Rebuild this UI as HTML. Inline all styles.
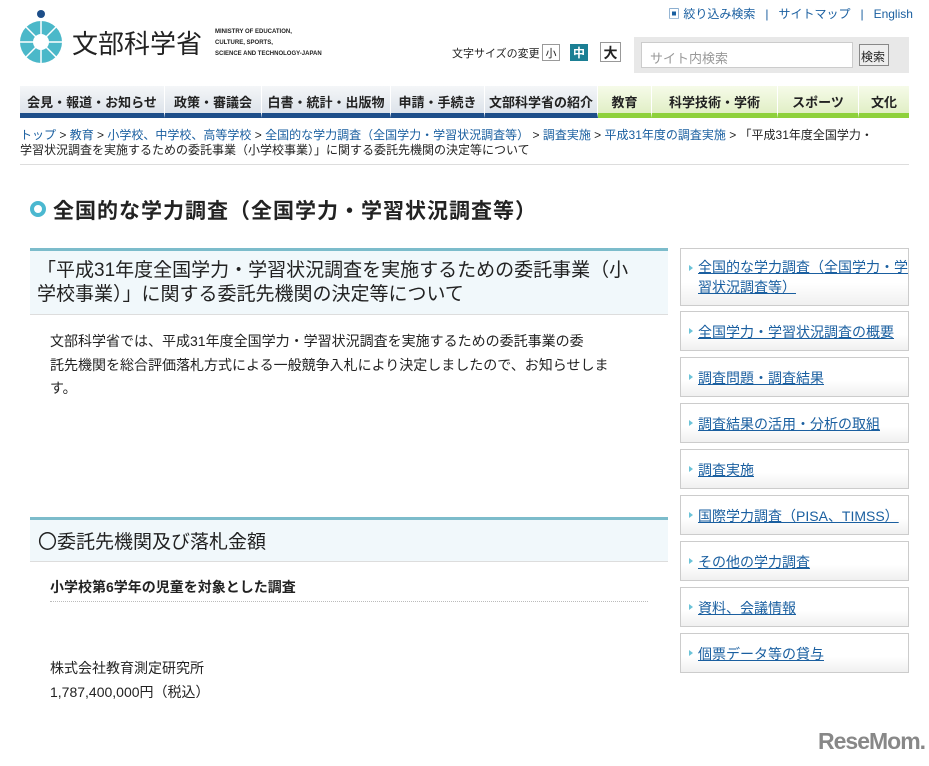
<!DOCTYPE html><html><head><meta charset="utf-8"><style>
*{margin:0;padding:0;box-sizing:border-box}
body{width:929px;height:766px;background:#fff;font-family:"Liberation Sans","Noto Sans CJK JP",sans-serif;color:#222;position:relative;overflow:hidden}
.a{position:absolute;white-space:nowrap}
a{color:#1a5fa0}
.nav{position:absolute;left:20px;top:86px;width:889px;height:32px;display:flex}
.nav div{height:32px;font-size:13px;font-weight:bold;display:flex;align-items:center;justify-content:center;border-right:1px solid #fff;background:linear-gradient(#f4f6f8,#dde3ea);border-bottom:5px solid #1d4e89;padding-top:4px}
.nav div.g{background:linear-gradient(#f6fbe9,#e1efc6);border-bottom-color:#8ed13c}
.side{position:absolute;left:680px;width:229px;height:40px;border:1px solid #ccc;background:linear-gradient(#fff 60%,#f0f0f0);font-size:14px;padding:10px 0 0 17px;color:#1a5fa0}
.side:before{content:"";position:absolute;left:8px;top:16px;border-left:4px solid #6cc3d8;border-top:3px solid transparent;border-bottom:3px solid transparent}
.side span{text-decoration:underline}
</style></head><body>
<div class="a" style="left:668px;top:5px;font-size:12px;color:#1a5fa0">▣ 絞り込み検索 &nbsp;&nbsp;|&nbsp;&nbsp; サイトマップ &nbsp;&nbsp;|&nbsp;&nbsp; English</div>
<svg class="a" style="left:18px;top:8px" width="46" height="56" viewBox="0 0 46 56"><circle cx="23" cy="6" r="4" fill="#1d4e89"/><circle cx="23" cy="34" r="21" fill="#4bb8c9"/><circle cx="23" cy="34" r="8" fill="#fff"/><g stroke="#fff" stroke-width="1.5"><line x1="23" y1="13" x2="23" y2="55"/><line x1="2" y1="34" x2="44" y2="34"/><line x1="8" y1="19" x2="38" y2="49"/><line x1="38" y1="19" x2="8" y2="49"/></g></svg>
<div class="a" style="left:72px;top:24px;font-size:26px;letter-spacing:0px;color:#222">文部科学省</div>
<div class="a" style="left:215px;top:27px;font-size:6px;line-height:11px;font-weight:bold">MINISTRY OF EDUCATION,<br>CULTURE, SPORTS,<br>SCIENCE AND TECHNOLOGY-JAPAN</div>
<div class="a" style="left:452px;top:45px;font-size:11px">文字サイズの変更</div>
<div class="a" style="left:542px;top:44px;width:18px;height:17px;border:1px solid #999;font-size:11px;text-align:center">小</div>
<div class="a" style="left:570px;top:44px;width:18px;height:17px;background:#1b7f94;color:#fff;font-size:12px;font-weight:bold;text-align:center">中</div>
<div class="a" style="left:600px;top:42px;width:21px;height:20px;border:1px solid #999;font-size:14px;font-weight:bold;text-align:center">大</div>
<div class="a" style="left:634px;top:37px;width:275px;height:36px;background:#e8e8e8"></div>
<div class="a" style="left:641px;top:42px;width:212px;height:26px;background:#fff;border:1px solid #ccc;font-size:13px;color:#999;padding:5px 8px">サイト内検索</div>
<div class="a" style="left:859px;top:44px;width:30px;height:22px;border:1px solid #888;background:#eee;font-size:12px;padding:3px 1px">検索</div>
<div class="nav"><div style="width:145px">会見・報道・お知らせ</div><div style="width:97px">政策・審議会</div><div style="width:129px">白書・統計・出版物</div><div style="width:94px">申請・手続き</div><div style="width:113px">文部科学省の紹介</div><div class="g" style="width:54px">教育</div><div class="g" style="width:126px">科学技術・学術</div><div class="g" style="width:81px">スポーツ</div><div class="g" style="width:50px;border-right:0">文化</div></div>
<div class="a" style="left:20px;top:128px;font-size:12px;line-height:15px;color:#222"><a>トップ</a> &gt; <a>教育</a> &gt; <a>小学校、中学校、高等学校</a> &gt; <a>全国的な学力調査（全国学力・学習状況調査等）</a> &gt; <a>調査実施</a> &gt; <a>平成31年度の調査実施</a> &gt; 「平成31年度全国学力・<br>学習状況調査を実施するための委託事業（小学校事業）」に関する委託先機関の決定等について</div>
<div class="a" style="left:20px;top:164px;width:889px;border-top:1px solid #ddd"></div>
<div class="a" style="left:30px;top:201px;width:16px;height:16px;border-radius:50%;border:4px solid #4bb8d0"></div>
<div class="a" style="left:53px;top:195px;font-size:21px;font-weight:bold;letter-spacing:1px">全国的な学力調査（全国学力・学習状況調査等）</div>
<div class="a" style="left:30px;top:248px;width:638px;height:67px;background:#f1f8fb;border-top:3px solid #7cbccb;border-bottom:1px solid #ddd"></div>
<div class="a" style="left:37px;top:259px;font-size:19px;line-height:24px">「平成31年度全国学力・学習状況調査を実施するための委託事業（小<br>学校事業）」に関する委託先機関の決定等について</div>
<div class="a" style="left:50px;top:330px;font-size:14px;line-height:23.5px">文部科学省では、平成31年度全国学力・学習状況調査を実施するための委託事業の委<br>託先機関を総合評価落札方式による一般競争入札により決定しましたので、お知らせしま<br>す。</div>
<div class="a" style="left:30px;top:517px;width:638px;height:45px;background:#f1f8fb;border-top:3px solid #7cbccb;border-bottom:1px solid #ddd"></div>
<div class="a" style="left:38px;top:527px;font-size:19px">〇委託先機関及び落札金額</div>
<div class="a" style="left:50px;top:577px;font-size:14px;font-weight:bold">小学校第6学年の児童を対象とした調査</div>
<div class="a" style="left:50px;top:601px;width:598px;border-top:1px dotted #bbb"></div>
<div class="a" style="left:50px;top:656px;font-size:14px;line-height:24px">株式会社教育測定研究所<br>1,787,400,000円（税込）</div>
<div class="side" style="top:248px;height:58px;line-height:20px;padding-top:8px"><span>全国的な学力調査（全国学力・学<br>習状況調査等）</span></div>
<div class="side" style="top:311px"><span>全国学力・学習状況調査の概要</span></div>
<div class="side" style="top:357px"><span>調査問題・調査結果</span></div>
<div class="side" style="top:403px"><span>調査結果の活用・分析の取組</span></div>
<div class="side" style="top:449px"><span>調査実施</span></div>
<div class="side" style="top:495px"><span>国際学力調査（PISA、TIMSS）</span></div>
<div class="side" style="top:541px"><span>その他の学力調査</span></div>
<div class="side" style="top:587px"><span>資料、会議情報</span></div>
<div class="side" style="top:633px"><span>個票データ等の貸与</span></div>
<div class="a" style="left:818px;top:728px;font-size:23px;font-weight:bold;color:#888;letter-spacing:-1px">ReseMom.</div>
</body></html>
